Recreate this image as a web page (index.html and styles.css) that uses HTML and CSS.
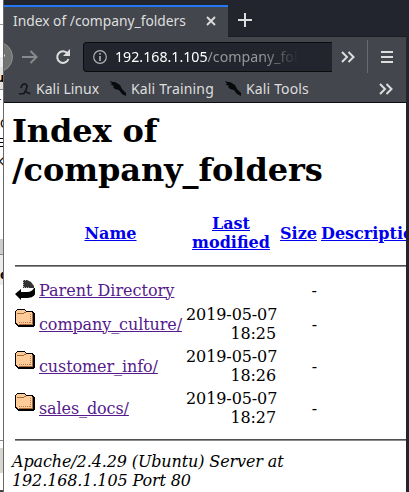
FILE: index.html
```html
<!DOCTYPE html>
<html lang="en">
<head>
<meta charset="utf-8">
<title>Index of /company_folders</title>
<link rel="stylesheet" href="styles.css">
</head>
<body>
<svg class="defs" width="0" height="0" aria-hidden="true">
  <symbol id="folder" viewBox="0 0 20 22">
    <g shape-rendering="crispEdges">
      <path d="M2 0h8v1h1v1h7v1h1v1h1v13h-1v1H3v-1H2v-1H1v-1H0V2h1V1h1z" fill="#000"/>
      <path d="M2 1h8v1h1v1h6v1h1v10h-1v2H3v-1H2v-1H1V2h1z" fill="#fc9"/>
      <path d="M2 4h7v1H2zM9 3h2v1H9zM17 4h1v12H4v-1h13z" fill="#a86a3a"/>
      <path d="M15.500 5v10M4 13.500h11" fill="none" stroke="#b57949" stroke-dasharray="1 1"/>
    </g>
  </symbol>
  <symbol id="dragon" viewBox="0 0 17 17">
    <path d="M0 1l3 1 2 0 5 3 2 4 4 4 0 3-4-2-3-4-4-1-2-2 1-1-4-2 2 0z" fill="#080a0c"/>
  </symbol>
  <symbol id="more" viewBox="0 0 14 12">
    <path d="M1 1l5 5-5 5M7.500 1l5 5-5 5" fill="none" stroke="#ddd" stroke-width="2"/>
  </symbol>
</svg>
<div class="desktop">
  <div class="behind">
    <div class="b1"></div><div class="b2"></div><div class="b3">u</div><div class="b4">r</div>
    <div class="b5">C</div><div class="b6">E</div><div class="b7">K</div><div class="b8"></div>
    <div class="b9">d</div><div class="b10"></div><div class="b11"></div><div class="b12"></div>
  </div>
  <div class="window">
    <div class="tabs">
      <div class="tab"><span class="title">Index of /company_folders</span>
        <svg width="10" height="10" viewBox="0 0 10 10"><path d="M1 1l8 8M9 1L1 9" stroke="#ddd" stroke-width="1.800"/></svg>
      </div>
      <svg class="plus" width="14" height="14" viewBox="0 0 14 14"><path d="M7 0v14M0 7h14" stroke="#ddd" stroke-width="2"/></svg>
    </div>
    <div class="toolbar">
      <svg class="back" width="9" height="32" viewBox="0 0 9 32"><circle cx="-6.500" cy="16" r="15" fill="#737373" stroke="#909090"/><path d="M0 14.500h1" stroke="#ddd" stroke-width="2"/></svg>
      <svg class="forward" width="16" height="14" viewBox="0 0 16 14"><path d="M0 7h14M8.500 1l6 6-6 6" fill="none" stroke="#898a8e" stroke-width="2"/></svg>
      <svg class="reload" width="16" height="16" viewBox="0 0 16 16"><path d="M12.600 4.500A5.800 5.800 0 1 0 13.500 10" fill="none" stroke="#ddd" stroke-width="2"/><path d="M15 0v7H8z" fill="#ddd"/></svg>
      <div class="url">
        <svg width="14" height="14" viewBox="0 0 14 14"><circle cx="7" cy="7" r="6.300" fill="none" stroke="#b2b2b5" stroke-width="1.200"/><path d="M7 3v1.700M7 6v5" stroke="#b2b2b5" stroke-width="1.600"/></svg>
        <span class="address-text"><b>192.168.1.105</b><span>/company_fol</span></span>
      </div>
      <svg class="more" width="14" height="12"><use href="#more"/></svg>
      <div class="divider"></div>
      <svg class="menu" width="12" height="12" viewBox="0 0 12 12"><path d="M0 1h12M0 6h12M0 11h12" stroke="#ddd" stroke-width="2"/></svg>
    </div>
    <div class="bookmarks">
      <svg class="kali" width="12" height="14" viewBox="0 0 12 14"><path d="M2 6C3 1 7 1 8 4c0 3-2 4-1 6 1 1 3 0 4 2M0 12l5-.5L6 9" fill="none" stroke="#15181b" stroke-width="1.700"/></svg>
      <span class="bm linux">Kali Linux</span>
      <svg class="dragon" width="17" height="17"><use href="#dragon"/></svg>
      <span class="bm training">Kali Training</span>
      <svg class="dragon" width="17" height="17"><use href="#dragon"/></svg>
      <span class="bm tools">Kali Tools</span>
      <svg class="more" width="14" height="12"><use href="#more"/></svg>
    </div>
    <main>
      <h1>Index of<br>/company_folders</h1>
      <div class="row head">
        <span></span><a href="#">Name</a><a href="#">Last<br>modified</a><a href="#">Size</a><a class="desc" href="#">Description</a>
      </div>
      <hr>
      <div class="row parent">
        <svg width="20" height="22" viewBox="0 0 20 22"><path d="M8 1h4l4 2 3 4v2H8z" fill="#333"/><path d="M8.500 1v8M10.500 1v2M9 8.500h6" stroke="#aaa" stroke-dasharray="1 1"/><path d="M0 15l6-5v3h6c4 0 6-2 7-4h1v6c-1 3-5 4-9 4H6v2z" fill="#000"/></svg>
        <a href="#">Parent Directory</a><span></span><span class="size">-</span>
      </div>
      <div class="row entry"><svg width="20" height="22"><use href="#folder"/></svg><a href="#">company_culture/</a><span class="date">2019-05-07<br>18:25</span><span class="size">-</span></div>
      <div class="row entry"><svg width="20" height="22"><use href="#folder"/></svg><a href="#">customer_info/</a><span class="date">2019-05-07<br>18:26</span><span class="size">-</span></div>
      <div class="row entry"><svg width="20" height="22"><use href="#folder"/></svg><a href="#">sales_docs/</a><span class="date">2019-05-07<br>18:27</span><span class="size">-</span></div>
      <hr class="last">
      <address>Apache/2.4.29 (Ubuntu) Server at<br>192.168.1.105 Port 80</address>
    </main>
  </div>
</div>
</body>
</html>
```
FILE: styles.css
```css
* { box-sizing: border-box; }
body { margin: 0; overflow: hidden; background: #23252e; }
svg { display: block; flex: none; }
.defs { position: absolute; }
.desktop { display: flex; width: 409px; height: 492px; }
.behind { width: 4px; flex: none; display: flex; flex-direction: column; overflow: hidden; background: #fff; border-right: 1px solid #69696b; font: 12px/14px "DejaVu Sans", sans-serif; color: #000; }
.behind div { flex: none; overflow: hidden; text-indent: -4px; }
.b1 { height: 25px; border-bottom: 1px solid #999; }
.b2 { height: 42px; border-bottom: 10px solid #eee; }
.b3 { height: 23px; background: #e5e2dc; border-bottom: 1px solid #888; font-weight: bold; padding-top: 4px; }
.b4 { height: 27px; padding-top: 5px; color: #503; }
.behind .b5 { height: 19px; text-indent: 0; }
.behind .b6, .behind .b7 { height: 19px; text-indent: -3px; }
.b8 { height: 80px; border-bottom: 15px solid #ccc; }
.behind .b9 { height: 31px; padding-top: 13px; font-weight: bold; background: #eeece8; border-top: 1px solid #888; text-indent: 0; }
.b10 { height: 156px; border-bottom: 1px solid #888; }
.b11 { height: 32px; border-top: 7px solid #fff; background: #d8d6d1; }
.b12 { height: 19px; border-bottom: 2px solid #444; }
.window { width: 402px; flex: none; overflow: hidden; background: #fff; font: 15px/20px "Noto Sans", sans-serif; color: #dededf; }
.tabs { height: 37px; padding-top: 5px; background: #23252e; display: flex; border-bottom: 1px solid #1b1d23; }
.tab { width: 224px; height: 32px; flex: none; border-top: 2px solid #2578f3; background: #43464d; display: flex; align-items: center; padding: 0 12px 2px 9px; justify-content: space-between; }
.title { font-size: 13.800px; white-space: nowrap; }
.plus { margin: 8px 0 0 10px; }
.toolbar { height: 38px; background: #43464d; display: flex; align-items: center; padding-top: 1px; }
.forward { margin-left: 9px; }
.reload { margin-left: 17px; }
.url { width: 249px; height: 30px; margin-left: 12px; background: #23252e; border: 1px solid #0b0c0e; border-right: 0; border-radius: 4px 0 0 4px; display: flex; align-items: center; padding-left: 9px; gap: 8px; }
.address-text { width: 184px; overflow: hidden; white-space: nowrap; font-size: 14.200px; color: #96979b; -webkit-mask-image: linear-gradient(90deg, #000 148px, transparent 184px); mask-image: linear-gradient(90deg, #000 148px, transparent 184px); }
.address-text b { font-weight: 400; color: #fff; }
.more { margin-left: 9px; }
.divider { width: 1px; height: 33px; background: #686a70; margin-left: 12px; }
.menu { margin-left: 13px; }
.bookmarks { height: 28px; background: #43464d; border-bottom: 1px solid #0b0d11; display: flex; align-items: center; padding: 0 13px 0 15px; white-space: nowrap; font-size: 14px; }
.bm { flex: none; }
.kali { margin-right: 5px; }
.linux { width: 74px; }
.dragon { margin-right: 4px; }
.training { width: 94px; letter-spacing: .15px; }
.tools { letter-spacing: .15px; }
.bookmarks .more { margin-left: auto; }
main { height: 389px; padding: 9px 0 0 8px; font: 16px/19px "DejaVu Serif", serif; color: #000; overflow: hidden; }
h1 { margin: 0 0 24px; font-size: 32px; line-height: 39px; letter-spacing: -.1px; white-space: nowrap; }
.row { display: grid; grid-template-columns: 20px 143px 90px 37px 100px; column-gap: 4px; padding-left: 3px; align-items: center; white-space: nowrap; }
.row a { color: #551a8b; }
.head { height: 38px; font-weight: 700; text-align: center; }
.row.head a { color: #00e; }
hr { height: 2px; margin: 13px 0 0 3px; border: 0; border-top: 1px solid #505050; background: #8b8b8b; }
.parent { height: 19px; margin: 12px 0 7px; }
.entry { height: 38px; margin-bottom: 4px; letter-spacing: -.1px; }
.entry svg { align-self: start; margin-top: 4px; }
.date, .size { text-align: right; }
hr.last { margin-top: 12px; }
address { margin-top: 11px; font-style: italic; white-space: nowrap; letter-spacing: -.12px; }
```
